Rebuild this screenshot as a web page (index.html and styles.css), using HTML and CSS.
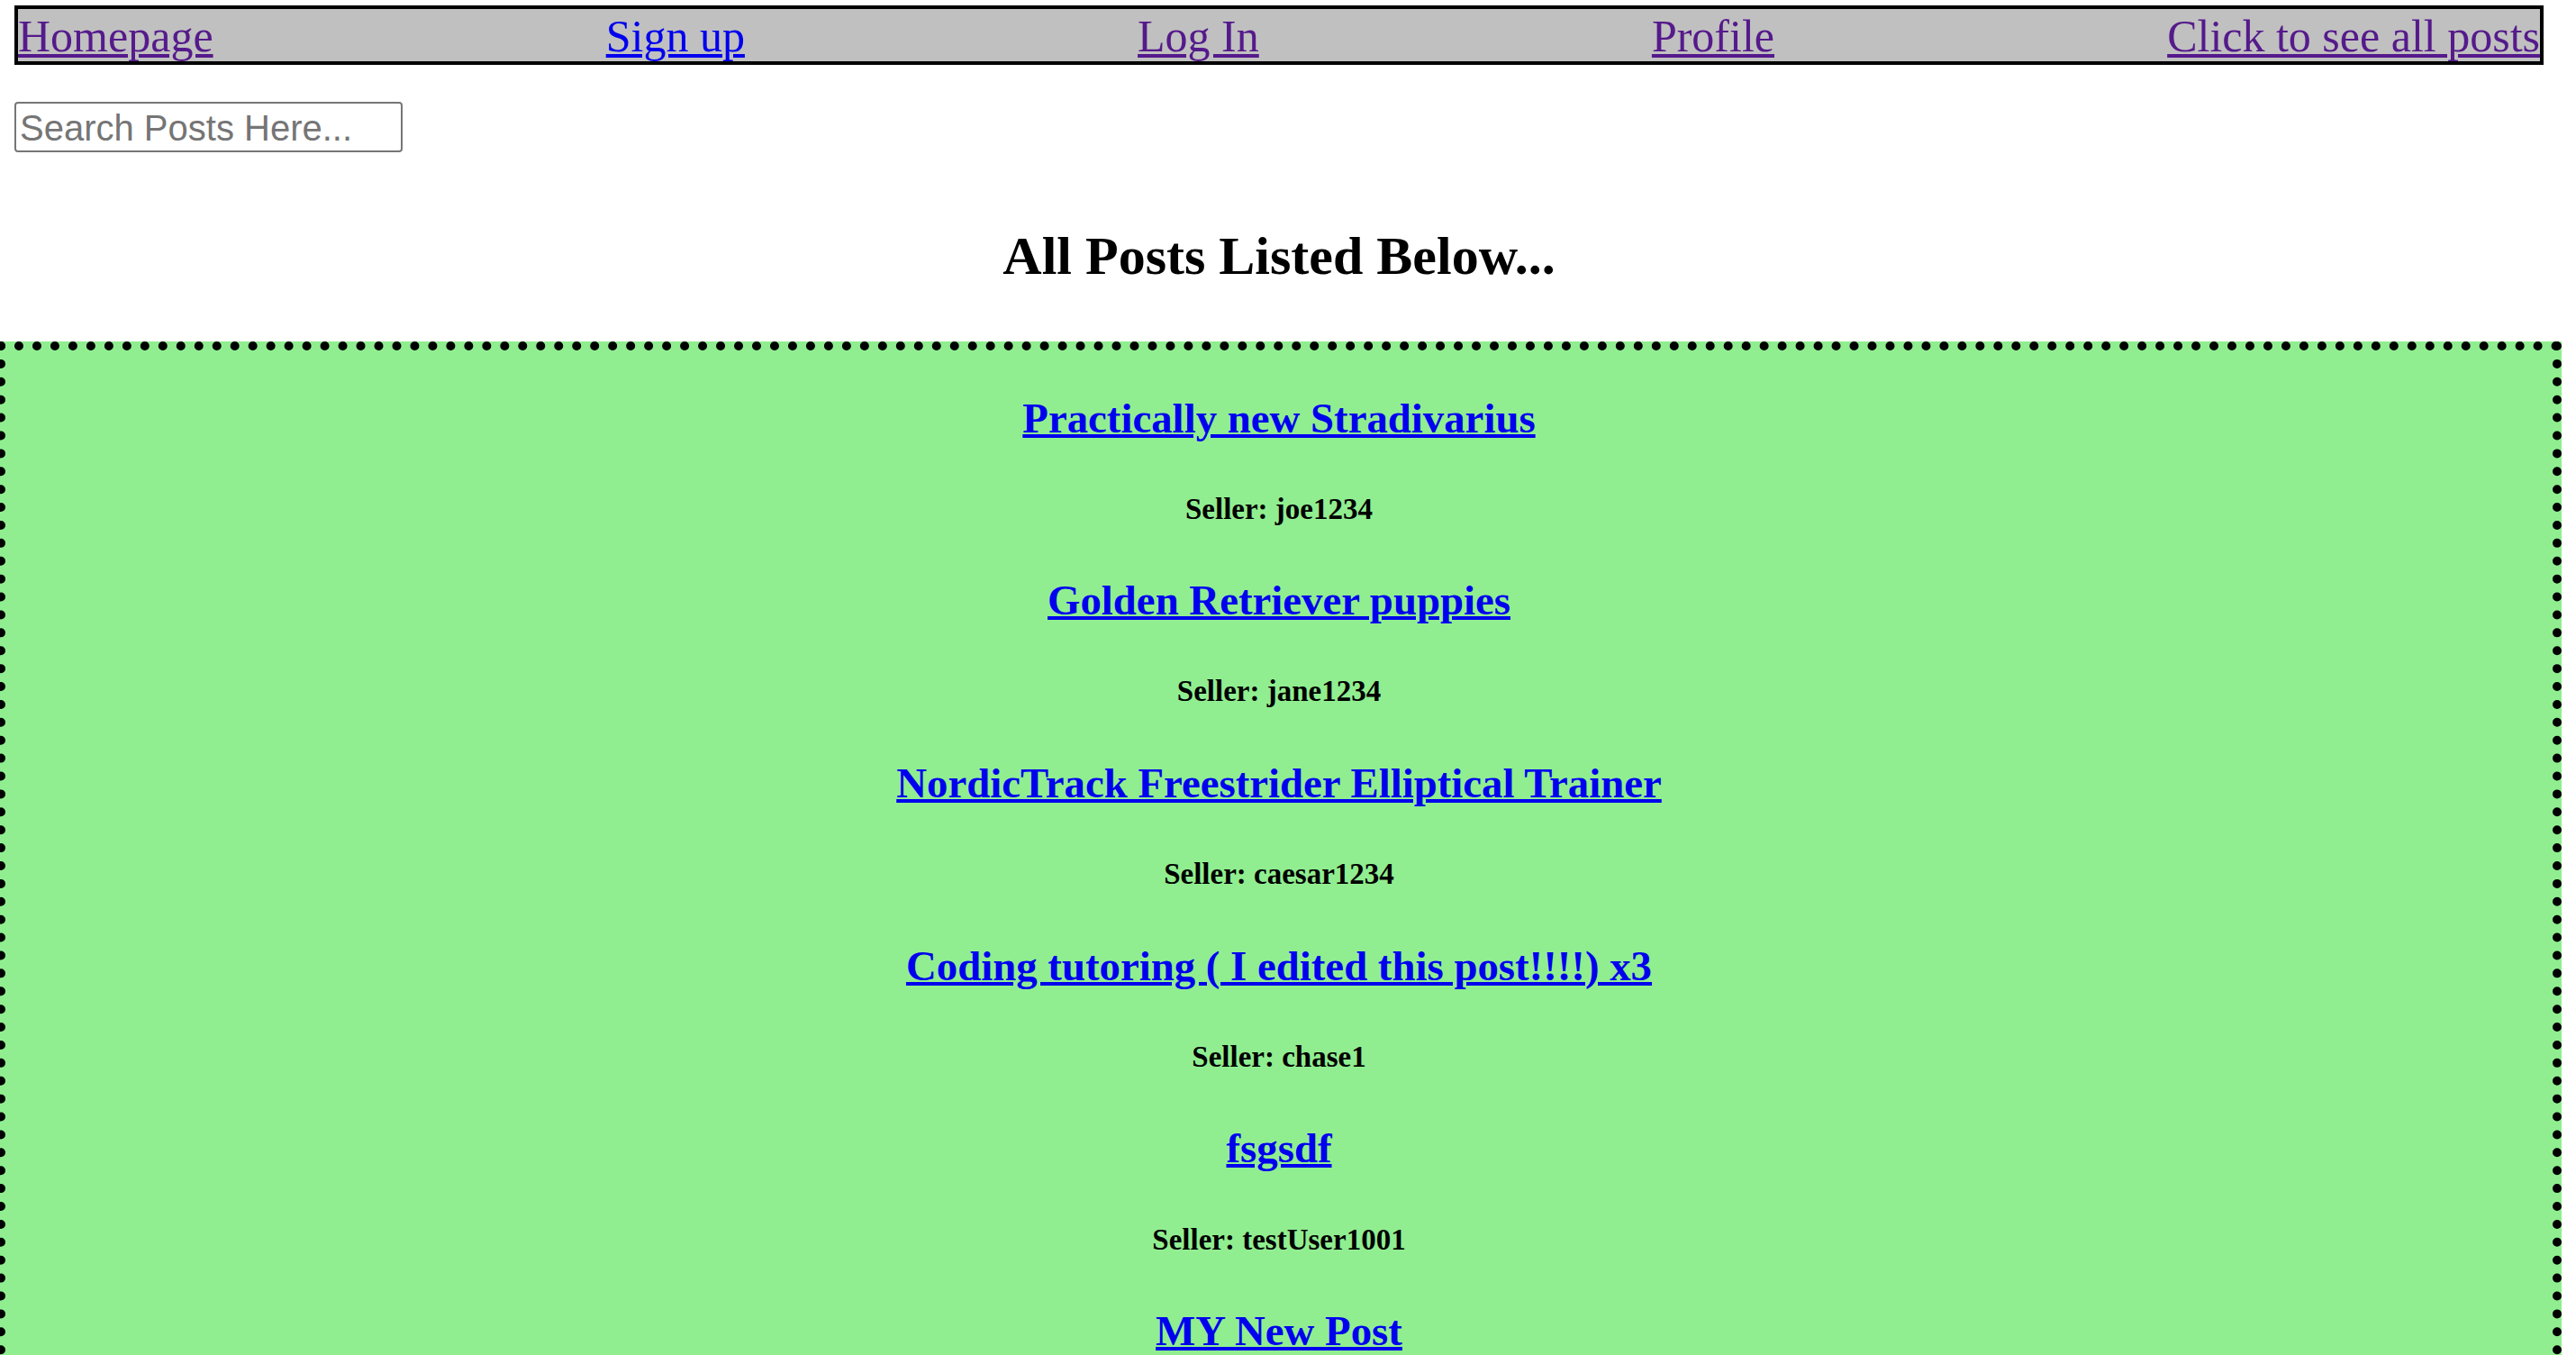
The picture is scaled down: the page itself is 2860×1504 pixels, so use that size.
FILE: index.html
```html
<!DOCTYPE html>
<html lang="en">
<head>
<meta charset="utf-8">
<title>All Posts</title>
<link rel="stylesheet" href="styles.css">
</head>
<body>
  <nav class="topnav">
    <a class="nav-link visited" href="#">Homepage</a>
    <a class="nav-link" href="#">Sign up</a>
    <a class="nav-link visited" href="#">Log In</a>
    <a class="nav-link visited" href="#">Profile</a>
    <a class="nav-link visited" href="#">Click to see all posts</a>
  </nav>

  <div class="search-row">
    <input class="search-input" type="text" placeholder="Search Posts Here...">
  </div>

  <h1 class="page-title">All Posts Listed Below...</h1>

  <section class="posts">
    <div class="post">
      <h2 class="post-title"><a href="#">Practically new Stradivarius</a></h2>
      <h4 class="post-seller">Seller: joe1234</h4>
    </div>
    <div class="post">
      <h2 class="post-title"><a href="#">Golden Retriever puppies</a></h2>
      <h4 class="post-seller">Seller: jane1234</h4>
    </div>
    <div class="post">
      <h2 class="post-title"><a href="#">NordicTrack Freestrider Elliptical Trainer</a></h2>
      <h4 class="post-seller">Seller: caesar1234</h4>
    </div>
    <div class="post">
      <h2 class="post-title"><a href="#">Coding tutoring ( I edited this post!!!!) x3</a></h2>
      <h4 class="post-seller">Seller: chase1</h4>
    </div>
    <div class="post">
      <h2 class="post-title"><a href="#">fsgsdf</a></h2>
      <h4 class="post-seller">Seller: testUser1001</h4>
    </div>
    <div class="post">
      <h2 class="post-title"><a href="#">MY New Post</a></h2>
      <h4 class="post-seller">Seller: chase1</h4>
    </div>
  </section>
</body>
</html>
```

FILE: styles.css
```css
html {
  overflow: hidden;
}

body {
  margin: 0;
  background: #ffffff;
  font-family: "Liberation Serif", "Times New Roman", serif;
  color: #000000;
}

.topnav {
  display: flex;
  justify-content: space-between;
  align-items: flex-start;
  margin: 6px 36px 0 16px;
  border: 4px solid #000000;
  background: #c0c0c0;
  padding-top: 2px;
  height: 56px;
}

.nav-link {
  font-size: 50px;
  line-height: 56px;
  color: #0000ee;
  text-decoration: underline;
  text-decoration-thickness: 4px;
  text-underline-offset: 3px;
  white-space: nowrap;
}

.nav-link.visited {
  color: #551a8b;
}

.search-row {
  margin: 41px 0 0 16px;
}

.search-input {
  display: block;
  box-sizing: border-box;
  width: 431px;
  height: 56px;
  margin: 0;
  padding: 3px 4px 1px 4px;
  border: 2px solid #767676;
  border-radius: 4px;
  font-family: "Liberation Sans", Arial, sans-serif;
  font-size: 40px;
  color: #000000;
  background: #ffffff;
  outline: none;
}

.search-input::placeholder {
  color: #757575;
}

.page-title {
  margin: 81px 36px 0 16px;
  font-size: 60px;
  line-height: 69px;
  font-weight: bold;
  text-align: center;
}

.posts {
  margin: 60px 16px 0 -4px;
  border: 10px dotted #000000;
  background: #90ee90;
  padding-top: 47.5px;
  text-align: center;
}

.post-title {
  margin: 0 0 55.3px 0;
  font-size: 46.8px;
  line-height: 54px;
  font-weight: bold;
}

.post-title a {
  color: #0000ee;
  text-decoration: underline;
  text-decoration-thickness: 4px;
  text-underline-offset: 2px;
}

.post-seller {
  margin: 0 0 55.4px 0;
  font-size: 33px;
  line-height: 38px;
  font-weight: bold;
}
```
